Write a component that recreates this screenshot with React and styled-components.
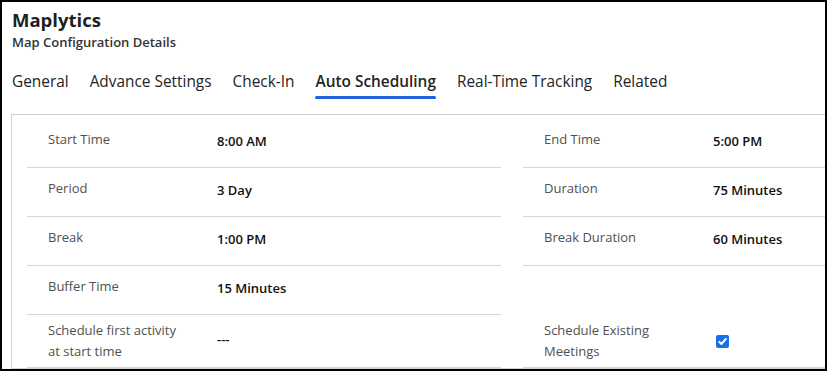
import React from 'react';
import styled, { createGlobalStyle } from 'styled-components';

const GlobalStyle = createGlobalStyle`
  html, body {
    margin: 0;
    padding: 0;
    background: #ffffff;
  }
  body {
    font-family: "Open Sans", "Noto Sans", "Liberation Sans", sans-serif;
    color: #242424;
  }
`;

const leftFields = [
  { label: 'Start Time', value: '8:00 AM' },
  { label: 'Period', value: '3 Day' },
  { label: 'Break', value: '1:00 PM' },
  { label: 'Buffer Time', value: '15 Minutes' },
  { label: 'Schedule first activity at start time', value: '---' },
];

const rightFields = [
  { label: 'End Time', value: '5:00 PM' },
  { label: 'Duration', value: '75 Minutes' },
  { label: 'Break Duration', value: '60 Minutes' },
  { empty: true },
  { label: 'Schedule Existing Meetings', checkbox: true },
];

const tabs = ['General', 'Advance Settings', 'Check-In', 'Auto Scheduling', 'Real-Time Tracking', 'Related'];

function CheckIcon() {
  return (
    <svg width="13" height="13" viewBox="0 0 13 13">
      <rect width="13" height="13" rx="2" fill="#1a6fe8" />
      <path d="M3.2 6.8 L5.4 9 L9.9 3.9" fill="none" stroke="#fff" strokeWidth="1.9" strokeLinecap="round" strokeLinejoin="round" />
    </svg>
  );
}

function Field({ field }) {
  if (field.empty) return <Cell noBorder />;
  return (
    <Cell>
      <Label>{field.label}</Label>
      <Value checkbox={field.checkbox}>{field.checkbox ? <CheckIcon /> : field.value}</Value>
    </Cell>
  );
}

export default function App() {
  return (
    <>
      <GlobalStyle />
      <Frame>
        <Header>
          <Title>Maplytics</Title>
          <Subtitle>Map Configuration Details</Subtitle>
        </Header>
        <Tabs>
          {tabs.map(t => (
            <Tab key={t} active={t === 'Auto Scheduling'}>{t}</Tab>
          ))}
        </Tabs>
        <Panel>
          <Column>
            {leftFields.map((f, i) => <Field key={i} field={f} />)}
          </Column>
          <Column>
            {rightFields.map((f, i) => <Field key={i} field={f} />)}
          </Column>
        </Panel>
      </Frame>
    </>
  );
}

const Frame = styled.div`
  position: relative;
  width: 827px;
  height: 371px;
  overflow: hidden;

  &::after {
    content: '';
    position: absolute;
    left: 0;
    top: 0;
    width: 827px;
    height: 371px;
    box-sizing: border-box;
    border: 2px solid #000;
    pointer-events: none;
  }
`;

const Header = styled.div`
  padding: 6px 0 0 12px;
`;

const Title = styled.div`
  font-size: 18.5px;
  font-weight: 700;
  line-height: 27px;
  color: #1f1f1f;
`;

const Subtitle = styled.div`
  font-size: 13px;
  font-weight: 600;
  line-height: 18px;
  color: #333;
`;

const Tabs = styled.div`
  display: flex;
  gap: 21px;
  padding: 20px 0 0 12px;
  height: 63px;
  box-sizing: border-box;
`;

const Tab = styled.div`
  position: relative;
  font-size: 15.4px;
  line-height: 22px;
  font-weight: ${p => (p.active ? 600 : 400)};
  color: #242424;
  white-space: nowrap;

  &::after {
    content: '';
    display: ${p => (p.active ? 'block' : 'none')};
    position: absolute;
    left: -1px;
    right: 0;
    top: 25px;
    height: 3px;
    border-radius: 2px;
    background: #1e63db;
  }
`;

const Panel = styled.div`
  margin: 0 0 0 11px;
  width: 1000px;
  border: 1px solid #d1d1d1;
  padding: 4px 0 0 15px;
  display: grid;
  grid-template-columns: 474px 474px;
  column-gap: 22px;
`;

const Column = styled.div`
  display: grid;
  grid-template-rows: repeat(4, 49px) 53px;
`;

const Cell = styled.div`
  display: flex;
  align-items: center;
  padding: 0 0 0 21px;
  border-bottom: 1px solid ${p => (p.noBorder ? 'transparent' : '#d6d6d6')};
`;

const Label = styled.div`
  width: 142px;
  min-height: 29px;
  margin-right: 27px;
  font-size: 13px;
  line-height: 21px;
  color: #505050;
`;

const Value = styled.div`
  display: flex;
  align-items: center;
  font-size: 13px;
  font-weight: 600;
  color: #111;
  padding-bottom: ${p => (p.checkbox ? '0' : '4px')};
  margin-left: ${p => (p.checkbox ? '3px' : '0')};
`;
